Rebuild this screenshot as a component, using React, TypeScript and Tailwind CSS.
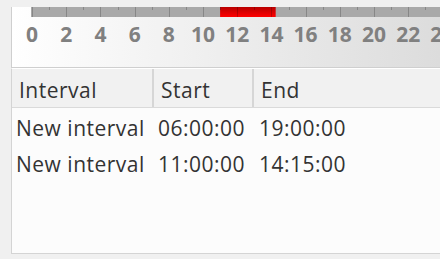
import React from "react";

const SCALE = 17.1;
const hours = Array.from({ length: 25 }, (_, i) => i);
const labels = Array.from({ length: 13 }, (_, i) => i * 2);

function TimeBar() {
  const x = (h: number) => 1 + SCALE * h;
  return (
    <svg width="409" height="10" className="block shrink-0">
      <defs>
        <linearGradient id="red" x1="0" y1="0" x2="0" y2="1">
          <stop offset="0" stopColor="#b80000" />
          <stop offset="1" stopColor="#ff0000" />
        </linearGradient>
      </defs>
      <rect x="0" y="0" width="409" height="10" fill="#a9a9a9" />
      <rect x={x(11)} y="0" width={x(14.25) - x(11)} height="10" fill="url(#red)" />
      {hours.map((h) => (
        <rect
          key={h}
          x={Math.round(x(h))}
          y="0"
          width="1"
          height={h % 2 === 0 ? 10 : 3}
          fill="#000"
          fillOpacity="0.2"
        />
      ))}
    </svg>
  );
}

const rows = [
  { name: "New interval", start: "06:00:00", end: "19:00:00" },
  { name: "New interval", start: "11:00:00", end: "14:15:00" },
];

export default function App() {
  return (
    <div
      className="w-[440px] h-[259px] bg-[#f0f0f0] overflow-hidden pt-[7px] pl-[11px] flex flex-col"
      style={{ fontFamily: '"Open Sans", "Noto Sans", sans-serif' }}
    >
      <div className="h-[61px] shrink-0 border-l border-b border-[#cfcfcf] bg-linear-to-r from-white to-[#dcdcdc] flex flex-col overflow-hidden">
        <div className="pl-[19px]">
          <TimeBar />
        </div>
        <div className="flex mt-[7px] ml-[3px] text-[21px] leading-none font-bold text-[#808080]">
          {labels.map((l) => (
            <div key={l} className="w-[34.2px] shrink-0 flex justify-center whitespace-nowrap">
              {l}
            </div>
          ))}
        </div>
      </div>
      <div className="h-[186px] shrink-0 border-l border-b border-t border-t-white border-[#d4d4d4] bg-[#fcfcfc] flex flex-col text-[21px] leading-none tracking-[0.5px] text-[#333333]">
        <div className="h-[39px] shrink-0 bg-[#f1f1f1] border-b border-[#dadada] grid grid-cols-[142px_100px_1fr]">
          <div className="border-r-2 border-[#d6d6d6] pl-[7px] pt-[11px]">Interval</div>
          <div className="border-r-2 border-[#d6d6d6] pl-[7px] pt-[11px]">Start</div>
          <div className="pl-[7px] pt-[11px]">End</div>
        </div>
        <div className="pt-[10px] flex flex-col">
          {rows.map((r, i) => (
            <div key={i} className="h-[36px] grid grid-cols-[142px_100px_1fr] whitespace-nowrap">
              <div className="pl-[4px]">{r.name}</div>
              <div className="pl-[4px]">{r.start}</div>
              <div className="pl-[5px]">{r.end}</div>
            </div>
          ))}
        </div>
      </div>
    </div>
  );
}
